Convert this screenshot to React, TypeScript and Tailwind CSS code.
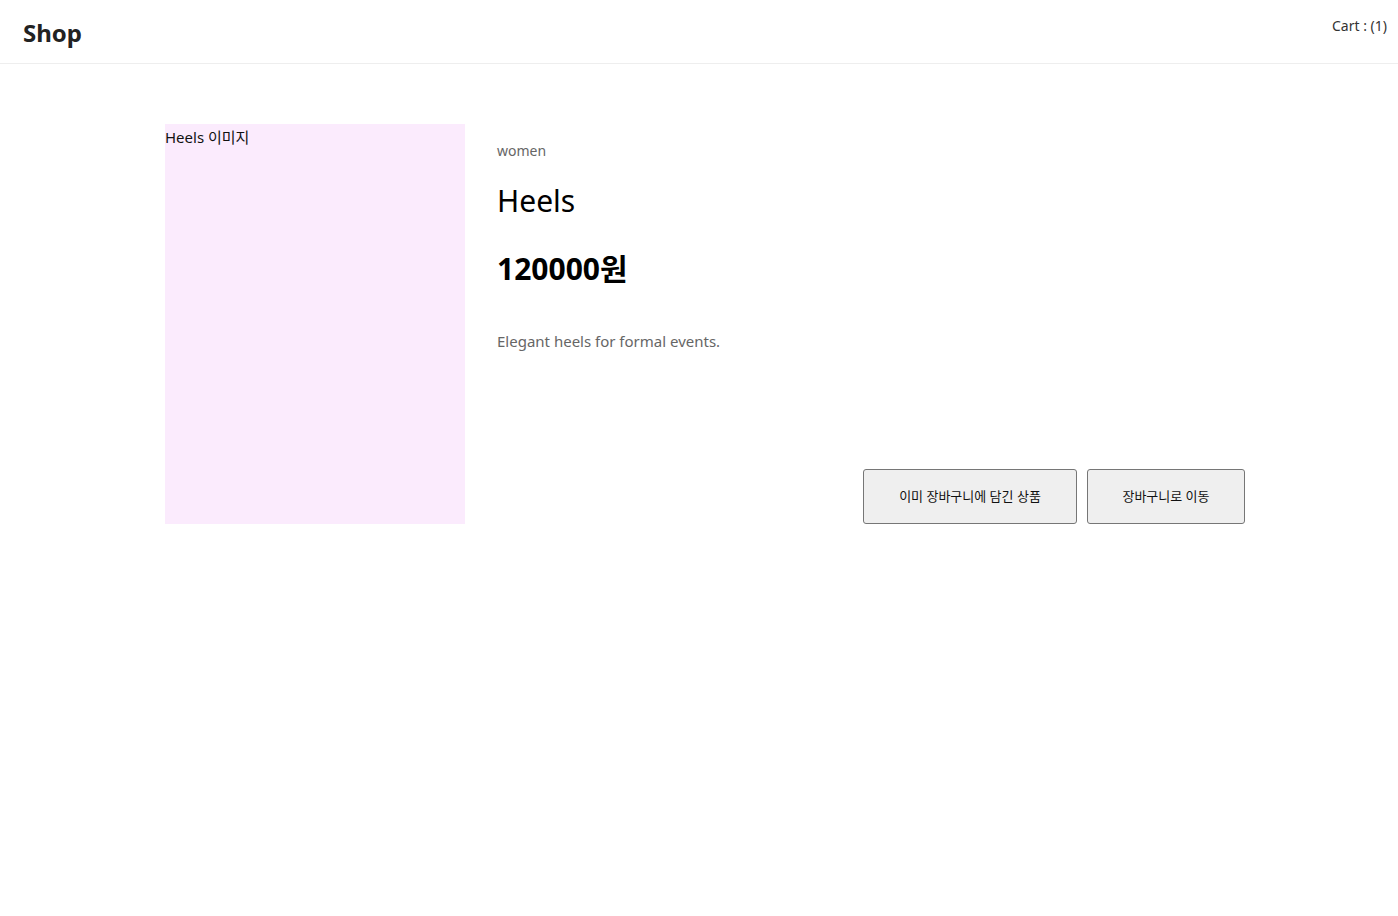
export default function App() {
  return (
    <div className="min-h-screen bg-white text-[#222] font-['Noto_Sans','Noto_Sans_CJK_KR',sans-serif]">
      <header className="flex h-16 items-start justify-between border-b border-[#eeeeee] px-[23px]">
        <h1 className="mt-[17px] text-[24px] font-bold leading-[32px] text-[#222]">Shop</h1>
        <span className="mr-[-12px] mt-[16px] text-[14px] leading-[20px] text-[#333]">Cart : (1)</span>
      </header>

      <main className="ml-[165px] mt-[60px] flex w-[1080px] gap-8">
        <div className="h-[400px] w-[300px] shrink-0 bg-[#fbebfd] text-[15px] leading-[26px] text-[#111]">
          Heels 이미지
        </div>
        <div className="flex flex-1 flex-col pt-[17px]">
          <p className="text-[14px] leading-[20px] text-[#666]">women</p>
          <h2 className="mt-[20px] text-[30px] leading-[40px] text-black">Heels</h2>
          <p className="mt-[28px] text-[30px] font-bold leading-[40px] text-black">120000원</p>
          <p className="mt-[40px] text-[15px] leading-[24px] text-[#666]">Elegant heels for formal events.</p>
          <div className="mt-auto flex justify-end gap-[10px]">
            <button className="h-[55px] w-[214px] rounded-[3px] border border-[#767676] bg-[#efefef] text-[13px] text-[#111]">
              이미 장바구니에 담긴 상품
            </button>
            <button className="h-[55px] w-[158px] rounded-[3px] border border-[#767676] bg-[#efefef] text-[13px] text-[#111]">
              장바구니로 이동
            </button>
          </div>
        </div>
      </main>
    </div>
  )
}
